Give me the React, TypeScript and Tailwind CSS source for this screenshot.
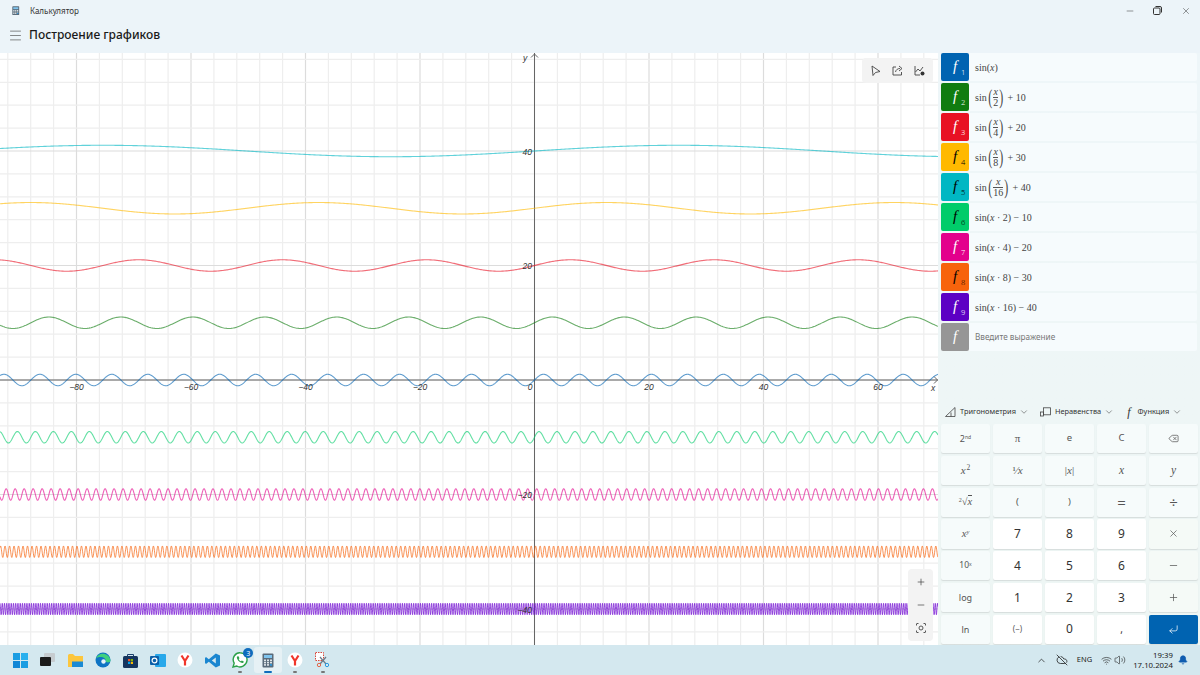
import { useMemo, type ReactNode } from 'react';
import {
  ChevronDown,
  ChevronUp,
  CloudOff,
  CornerDownLeft,
  Delete,
  Menu,
  Minus,
  Plus,
  Bell,
  Volume2,
  Wifi,
  X
} from 'lucide-react';

const UI = { fontFamily: '"Noto Sans", "Open Sans", sans-serif' };
const SERIF = { fontFamily: '"Liberation Serif", serif' };

// chart geometry, in page pixels
const X0 = 534.5;
const Y0 = 380;
const UNIT = 5.725;
const TOP = 53;
const BOTTOM = 645;
const RIGHT = 938;

const CURVES = [
  { k: 1, off: 0, color: '#0063b1', step: 0.5 },
  { k: 0.5, off: 10, color: '#107c10', step: 1 },
  { k: 0.25, off: 20, color: '#e81123', step: 1 },
  { k: 0.125, off: 30, color: '#ffb900', step: 1 },
  { k: 0.0625, off: 40, color: '#00b7c3', step: 1 },
  { k: 2, off: -10, color: '#00cc6a', step: 0.5 },
  { k: 4, off: -20, color: '#e3008c', step: 0.25 },
  { k: 8, off: -30, color: '#f7630c', step: 0.2 },
  { k: 16, off: -40, color: '#6b00d0', step: 0.1 }
];

function curvePath(k: number, off: number, step: number) {
  const pts: string[] = [];
  for (let px = 0; px <= RIGHT; px += step) {
    const x = (px - X0) / UNIT;
    const y = Y0 - UNIT * (Math.sin(x * k) + off);
    pts.push(`${px.toFixed(2)},${y.toFixed(2)}`);
  }
  return 'M' + pts.join('L');
}

function Chart() {
  const paths = useMemo(() => CURVES.map((c) => ({ ...c, d: curvePath(c.k, c.off, c.step) })), []);
  const vLines: number[] = [];
  for (let i = -24; i <= 18; i++) vLines.push(i);
  const hLines: number[] = [];
  for (let i = -12; i <= 14; i++) hLines.push(i);
  return (
    <svg className="block h-full w-full" viewBox={`0 ${TOP} ${RIGHT} ${BOTTOM - TOP}`}>
      {vLines.map((i) => {
        const x = X0 + i * 4 * UNIT;
        return <line key={i} x1={x} x2={x} y1={TOP} y2={BOTTOM} stroke={i % 5 === 0 ? '#dcdcdc' : '#eeeeee'} strokeWidth={1.2} />;
      })}
      {hLines.map((i) => {
        const y = Y0 - i * 4 * UNIT;
        return <line key={i} x1={0} x2={RIGHT} y1={y} y2={y} stroke={i % 5 === 0 ? '#dcdcdc' : '#eeeeee'} strokeWidth={1.2} />;
      })}
      <line x1={0} x2={RIGHT} y1={Y0} y2={Y0} stroke="#666" strokeWidth={1} />
      <line x1={X0} x2={X0} y1={TOP} y2={BOTTOM} stroke="#666" strokeWidth={1} />
      <path d={`M${X0 - 3.5} ${TOP + 4.5}L${X0} ${TOP + 1}L${X0 + 3.5} ${TOP + 4.5}`} fill="none" stroke="#666" />
      <path d={`M${RIGHT - 4} ${Y0 - 3.5}L${RIGHT - 0.5} ${Y0}L${RIGHT - 4} ${Y0 + 3.5}`} fill="none" stroke="#666" />
      {paths.map((c) => (
        <path key={c.k} d={c.d} fill="none" stroke={c.color} strokeOpacity={c.k >= 8 ? 0.7 : 0.62} strokeWidth={c.k >= 8 ? 1 : 1.1} />
      ))}
      <g fontSize="8.5" fontStyle="italic" fill="#333" style={{ fontFamily: '"Liberation Sans", sans-serif' }}>
        {[-80, -60, -40, -20, 20, 40, 60].map((v) => (
          <text key={v} x={X0 + v * UNIT} y={390} textAnchor="middle">
            {v < 0 ? `−${-v}` : v}
          </text>
        ))}
        <text x={530} y={390} textAnchor="middle">0</text>
        <text x={933} y={391} textAnchor="middle">x</text>
        <text x={525} y={61} textAnchor="middle">y</text>
        {[40, 20, -20, -40].map((v) => (
          <text key={v} x={532} y={Y0 - v * UNIT + 3.5} textAnchor="end">
            {v < 0 ? `−${-v}` : v}
          </text>
        ))}
      </g>
    </svg>
  );
}

function Paren({ children }: { children: ReactNode }) {
  return (
    <span className="inline-flex items-center">
      <span className="text-[20px] leading-none font-light scale-x-60">(</span>
      {children}
      <span className="text-[20px] leading-none font-light scale-x-60">)</span>
    </span>
  );
}

function Frac({ d }: { d: string }) {
  return (
    <span className="inline-flex flex-col items-center text-[10px] leading-[10px]">
      <span className="italic">x</span>
      <span className="border-t border-[#555]">{d}</span>
    </span>
  );
}

function Sin({ d, tail }: { d: string; tail: string }) {
  return (
    <span className="inline-flex items-center whitespace-pre">
      sin
      <Paren>
        <Frac d={d} />
      </Paren>
      {tail}
    </span>
  );
}

const FUNCS: { color: string; dark?: boolean; body: ReactNode }[] = [
  { color: '#0063b1', body: <span>sin(<i>x</i>)</span> },
  { color: '#107c10', body: <Sin d="2" tail=" + 10" /> },
  { color: '#e81123', body: <Sin d="4" tail=" + 20" /> },
  { color: '#ffb900', dark: true, body: <Sin d="8" tail=" + 30" /> },
  { color: '#00b7c3', dark: true, body: <Sin d="16" tail=" + 40" /> },
  { color: '#00cc6a', dark: true, body: <span>sin(<i>x</i> · 2) − 10</span> },
  { color: '#e3008c', body: <span>sin(<i>x</i> · 4) − 20</span> },
  { color: '#f7630c', dark: true, body: <span>sin(<i>x</i> · 8) − 30</span> },
  { color: '#5c00c4', body: <span>sin(<i>x</i> · 16) − 40</span> }
];

function Swatch({ color, dark, n }: { color: string; dark?: boolean; n?: number }) {
  return (
    <div
      className={`flex h-[28px] w-[28px] shrink-0 items-center justify-center rounded-[2px] ${dark ? 'text-black' : 'text-white'}`}
      style={{ backgroundColor: color }}
    >
      <span className="relative -translate-y-[1px] text-[15px] leading-none font-light italic" style={SERIF}>
        f
        {n && (
          <span className="absolute top-[10px] left-[8px] text-[7.5px] not-italic" style={UI}>
            {n}
          </span>
        )}
      </span>
    </div>
  );
}

function FunctionList() {
  return (
    <div className="flex flex-col gap-[2px] pl-[3px] pr-[3px]">
      {FUNCS.map((f, i) => (
        <div key={i} className="flex h-[28px] items-center gap-[6px] rounded-[2px] bg-[#f6fbfd]">
          <Swatch color={f.color} dark={f.dark} n={i + 1} />
          <div className="text-[10px] text-[#444]" style={SERIF}>
            {f.body}
          </div>
        </div>
      ))}
      <div className="flex h-[28px] items-center gap-[6px] rounded-[2px] bg-[#f6fbfd]">
        <Swatch color="#969696" />
        <div className="text-[8.2px] text-[#777]" style={UI}>
          Введите выражение
        </div>
      </div>
    </div>
  );
}

type Kind = 'fn' | 'num' | 'op' | 'go';
const KEYS: { k: Kind; c: ReactNode; key: string }[] = [
  { key: '2nd', k: 'fn', c: <span className="text-[9px]">2<sup className="text-[5px]">nd</sup></span> },
  { key: 'pi', k: 'fn', c: <span className="text-[11px]" style={SERIF}>π</span> },
  { key: 'e', k: 'fn', c: <span className="text-[9.5px]">e</span> },
  { key: 'C', k: 'fn', c: <span className="text-[9.5px]">C</span> },
  { key: 'bs', k: 'fn', c: <Delete size={11} strokeWidth={1.6} /> },
  { key: 'x2', k: 'fn', c: <span className="text-[11px]" style={SERIF}><i>x</i><sup className="ml-[1px] text-[7.5px]">2</sup></span> },
  { key: '1x', k: 'fn', c: <span className="text-[11px]" style={SERIF}>¹⁄<i>x</i></span> },
  { key: 'abs', k: 'fn', c: <span className="text-[11px]" style={SERIF}>|<i>x</i>|</span> },
  { key: 'x', k: 'fn', c: <i className="text-[11.5px]" style={SERIF}>x</i> },
  { key: 'y', k: 'fn', c: <i className="text-[11.5px]" style={SERIF}>y</i> },
  { key: 'root', k: 'fn', c: <span className="text-[10.5px]" style={SERIF}><sup className="text-[6px]">2</sup>√<i className="border-t border-[#555]">x</i></span> },
  { key: 'lp', k: 'fn', c: <span className="text-[9.5px]">(</span> },
  { key: 'rp', k: 'fn', c: <span className="text-[9.5px]">)</span> },
  { key: 'eq', k: 'fn', c: <span className="text-[15px] leading-none">=</span> },
  { key: 'div', k: 'fn', c: <span className="text-[15px] leading-none">÷</span> },
  { key: 'xy', k: 'fn', c: <span className="text-[10.5px]" style={SERIF}><i>x</i><sup className="text-[6.5px]"><i>y</i></sup></span> },
  { key: '7', k: 'num', c: '7' },
  { key: '8', k: 'num', c: '8' },
  { key: '9', k: 'num', c: '9' },
  { key: 'mul', k: 'op', c: <X size={11} strokeWidth={1.5} /> },
  { key: '10x', k: 'fn', c: <span className="text-[8.5px]">10<sup className="text-[5px]">x</sup></span> },
  { key: '4', k: 'num', c: '4' },
  { key: '5', k: 'num', c: '5' },
  { key: '6', k: 'num', c: '6' },
  { key: 'sub', k: 'op', c: <Minus size={11} strokeWidth={1.6} /> },
  { key: 'log', k: 'fn', c: <span className="text-[9px]">log</span> },
  { key: '1', k: 'num', c: '1' },
  { key: '2', k: 'num', c: '2' },
  { key: '3', k: 'num', c: '3' },
  { key: 'add', k: 'op', c: <Plus size={11} strokeWidth={1.6} /> },
  { key: 'ln', k: 'fn', c: <span className="text-[9px]">ln</span> },
  { key: 'neg', k: 'num', c: <span className="text-[8px] text-[#555]">(−)</span> },
  { key: '0', k: 'num', c: '0' },
  { key: 'comma', k: 'num', c: <span className="text-[10px]">,</span> },
  { key: 'go', k: 'go', c: <CornerDownLeft size={11} strokeWidth={1.6} /> }
];

const KEY_STYLE: Record<Kind, string> = {
  fn: 'bg-[#f6fbfb] text-[#555]',
  num: 'bg-white text-[#333] text-[12px]',
  op: 'bg-[#f5faf7] text-[#555]',
  go: 'bg-[#0063b1] text-white'
};

function Keypad() {
  return (
    <div className="grid h-[220px] grid-cols-5 grid-rows-7 gap-x-[3px] gap-y-[2.6px] pl-[3px] pr-[2px]" style={UI}>
      {KEYS.map((b) => (
        <div
          key={b.key}
          className={`flex items-center justify-center rounded-[2px] shadow-[0_1px_1px_rgba(0,0,0,0.1)] ${KEY_STYLE[b.k]}`}
        >
          {b.c}
        </div>
      ))}
    </div>
  );
}

function Dropdowns() {
  return (
    <div className="flex h-[24px] items-center text-[7.4px] text-[#333]" style={UI}>
      <div className="flex items-center pl-[7px]">
        <svg width="11" height="10" viewBox="0 0 11 10" fill="none" stroke="#444" strokeWidth="0.8">
          <path d="M0.5 9.5L10 0.5V9.5Z" />
          <path d="M6 9.5V5.5" />
        </svg>
        <span className="ml-[4px]">Тригонометрия</span>
        <ChevronDown size={10} className="ml-[3px]" strokeWidth={1.2} />
      </div>
      <div className="ml-[11px] flex items-center">
        <svg width="11" height="10" viewBox="0 0 11 10" fill="none" stroke="#444" strokeWidth="0.8">
          <rect x="3.5" y="0.8" width="7" height="7" />
          <rect x="0.5" y="5" width="3" height="4" />
        </svg>
        <span className="ml-[4px]">Неравенства</span>
        <ChevronDown size={10} className="ml-[3px]" strokeWidth={1.2} />
      </div>
      <div className="ml-[13px] flex items-center">
        <i className="text-[12px] leading-none" style={SERIF}>f</i>
        <span className="ml-[7px]">Функция</span>
        <ChevronDown size={10} className="ml-[3px]" strokeWidth={1.2} />
      </div>
    </div>
  );
}

function CalcIcon({ size = 11 }: { size?: number }) {
  return (
    <svg width={size} height={size * 1.25} viewBox="0 0 12 15">
      <rect x="0.5" y="0.5" width="11" height="14" rx="1" fill="#5a6b7a" />
      <rect x="2" y="2" width="8" height="3" fill="#7fc4ee" />
      {[6.5, 8.8, 11.1].map((y) =>
        [2, 5, 8].map((x) => <rect key={`${x}-${y}`} x={x} y={y} width="2" height="1.6" fill={x === 8 && y === 11.1 ? '#2d9be0' : '#dfe6ea'} />)
      )}
    </svg>
  );
}

function YandexIcon() {
  return (
    <svg width="16" height="16" viewBox="0 0 16 16">
      <circle cx="8" cy="8" r="7.5" fill="#fff" />
      <path d="M4.5 3.5L8 9M11.5 3.5L8 9V13.5" fill="none" stroke="#f0352a" strokeWidth="2.2" />
    </svg>
  );
}

const TASK_ICONS: ReactNode[] = [
  <svg width="15" height="15" viewBox="0 0 15 15" key="win">
    <rect width="7" height="7" fill="#1b9de2" />
    <rect x="8" width="7" height="7" fill="#2ab0ee" />
    <rect y="8" width="7" height="7" fill="#1287d6" />
    <rect x="8" y="8" width="7" height="7" fill="#1b9de2" />
  </svg>,
  <svg width="15" height="14" viewBox="0 0 15 14" key="tv">
    <rect x="4" y="0" width="11" height="9" rx="1" fill="#c6ccd0" />
    <rect x="0" y="4" width="11" height="9" rx="1" fill="#1b1b1b" />
  </svg>,
  <svg width="15" height="13" viewBox="0 0 15 13" key="folder">
    <path d="M0 1.5Q0 0 1.5 0H5L7 2H15V13H0Z" fill="#fcc63d" />
    <rect x="4" y="7.5" width="11" height="5.5" fill="#1a8ad4" />
  </svg>,
  <svg width="16" height="16" viewBox="0 0 16 16" key="edge">
    <circle cx="8" cy="8" r="7.5" fill="#0f74c4" />
    <path d="M1 6.5C3 0 14 0 15.5 8.5C15.5 11 11 11 10.5 9C12 6 5 3 1 6.5Z" fill="#3fd07d" />
    <circle cx="8.5" cy="9.5" r="2.2" fill="#e6f4f8" />
  </svg>,
  <svg width="15" height="15" viewBox="0 0 15 15" key="store">
    <path d="M4.5 3V1.5H10.5V3" fill="none" stroke="#1b3f6d" strokeWidth="1" />
    <rect y="3" width="15" height="12" rx="1.5" fill="#16355e" />
    <rect x="5" y="6" width="2.2" height="2.2" fill="#f25022" />
    <rect x="7.8" y="6" width="2.2" height="2.2" fill="#7fba00" />
    <rect x="5" y="8.8" width="2.2" height="2.2" fill="#00a4ef" />
    <rect x="7.8" y="8.8" width="2.2" height="2.2" fill="#ffb900" />
  </svg>,
  <svg width="16" height="15" viewBox="0 0 16 15" key="outlook">
    <rect x="5" y="1" width="11" height="13" rx="1" fill="#28a8ea" />
    <rect x="0" y="3" width="9" height="9" rx="1" fill="#0b5fa8" />
    <circle cx="4.5" cy="7.5" r="2.4" fill="none" stroke="#fff" strokeWidth="1.2" />
  </svg>,
  <YandexIcon key="ya1" />,
  <svg width="15" height="15" viewBox="0 0 15 15" key="vsc">
    <path d="M10.8 0.5L15 2.5V12.5L10.8 14.5L3.8 8.8L1 11L0 10V5L1 4L3.8 6.2ZM10.8 4.5L6.8 7.5L10.8 10.5Z" fill="#1a86d0" fillRule="evenodd" />
  </svg>,
  <span className="relative block h-[16px] w-[16px]" key="wa">
    <svg width="16" height="16" viewBox="0 0 16 16">
      <path d="M1 15L2.2 11.2C-1 5.5 4 0.5 8 0.8C12.5 0.8 15.5 4.5 15 8.5C14.5 13.5 8.5 16.5 4.8 14Z" fill="#fff" stroke="#2ca14a" strokeWidth="1.4" />
      <path d="M5 4.5C4 7 8 11.5 11.2 11L11.8 9.5L9.8 8.5L9 9.3C8 9 7 8 6.7 7L7.5 6.2L6.5 4.3Z" fill="#2ca14a" />
    </svg>
    <span className="absolute -top-[4px] -right-[5px] flex h-[10px] w-[10px] items-center justify-center rounded-full bg-[#0f6cbd] text-[7px] leading-none text-white">
      3
    </span>
  </span>,
  <CalcIcon key="calc" size={12} />,
  <YandexIcon key="ya2" />,
  <svg width="15" height="16" viewBox="0 0 15 16" key="snip" fill="none">
    <rect x="0.5" y="0.5" width="8" height="8" fill="#fff" stroke="#d9483b" strokeDasharray="1.5 1" />
    <path d="M5 5L11 12M11 5L5 12" stroke="#6b7a88" strokeWidth="1.2" />
    <circle cx="12" cy="13" r="1.7" stroke="#2d9be0" />
    <circle cx="4" cy="13" r="1.7" stroke="#e2674a" />
  </svg>
];

function Taskbar() {
  return (
    <div className="flex h-[30px] items-center justify-between bg-[#d4e8ef] pl-[6.5px]">
      <div className="flex h-full items-center">
        {TASK_ICONS.map((ic, i) => (
          <div
            key={i}
            className={`relative flex h-[26px] w-[27.5px] items-center justify-center rounded-[3px] ${i === 9 ? 'bg-[#e6f1f5]' : ''}`}
          >
            {ic}
            {i === 9 && <span className="absolute bottom-0 h-[2px] w-[8px] rounded-full bg-[#0f6cbd]" />}
            {(i === 8 || i === 10 || i === 11) && <span className="absolute bottom-0 h-[2px] w-[4px] rounded-full bg-[#777]" />}
          </div>
        ))}
      </div>
      <div className="flex h-full items-center text-[#222]" style={UI}>
        <ChevronUp size={11} strokeWidth={1.6} />
        <CloudOff size={12} strokeWidth={1.6} className="ml-[9px]" />
        <span className="ml-[9px] text-[7.5px]">ENG</span>
        <Wifi size={11} strokeWidth={1.4} className="ml-[9px]" />
        <Volume2 size={12} strokeWidth={1.2} className="ml-[2px]" />
        <div className="ml-[7px] text-right text-[7.8px] leading-[10px]">
          <div>19:39</div>
          <div>17.10.2024</div>
        </div>
        <Bell size={10} fill="#0f5cb0" stroke="#0f5cb0" className="mr-[12px] ml-[5px]" />
      </div>
    </div>
  );
}

export default function App() {
  return (
    <div className="flex h-[675px] w-[1200px] flex-col overflow-hidden bg-[#eef5f7]" style={UI}>
      {/* Title bar */}
      <div className="flex h-[21px] items-center justify-between bg-[#ecf4f9] pl-[12px]">
        <div className="flex items-center">
          <CalcIcon size={7.5} />
          <span className="ml-[10.5px] text-[8px] text-[#333]">Калькулятор</span>
        </div>
        <div className="flex items-center text-[#333]">
          <Minus size={10} strokeWidth={1.2} />
          <svg width="9" height="9" viewBox="0 0 9 9" fill="none" stroke="#333" strokeWidth="1" className="ml-[18px]">
            <rect x="0.5" y="2" width="6.5" height="6.5" rx="1" />
            <path d="M2.5 0.5H7Q8.5 0.5 8.5 2V6.5" />
          </svg>
          <X size={10} strokeWidth={1.2} className="mr-[9px] ml-[19px]" />
        </div>
      </div>
      {/* Header */}
      <div className="flex h-[32px] items-center bg-[#ecf4f9] pb-[4px] pl-[8px]">
        <Menu size={15} strokeWidth={1.1} className="text-[#555]" />
        <span className="ml-[6px] text-[12px] font-medium text-[#1a1a1a]">Построение графиков</span>
      </div>
      {/* Body */}
      <div className="flex h-[592px]">
        <div className="relative w-[938px] bg-white">
          <Chart />
          <div className="absolute top-[5px] right-[5px] flex h-[25px] w-[71px] items-center justify-around rounded-[4px] bg-[#f3f3f3] px-[3px] text-[#444]">
            <svg width="11" height="11" viewBox="0 0 11 11" fill="none" stroke="#444" strokeWidth="0.9" strokeLinejoin="round">
              <path d="M2 1L10 6.5L5.5 7.5L3 10.5Z" />
            </svg>
            <svg width="11" height="11" viewBox="0 0 11 11" fill="none" stroke="#444" strokeWidth="0.9">
              <path d="M4 2H1V10H9.5V7" />
              <path d="M3.5 7C4 4.5 6 3.5 8 3.5M7 1L10 3.5L7 6" />
            </svg>
            <svg width="11" height="11" viewBox="0 0 11 11" fill="none" stroke="#444" strokeWidth="0.9">
              <path d="M1 1V10H6" />
              <path d="M1.5 7L4 4L6 6L9 2" />
              <circle cx="8.5" cy="8.5" r="2" fill="#333" stroke="none" />
            </svg>
          </div>
          <div className="absolute right-[5px] bottom-[4px] flex h-[72px] w-[25px] flex-col items-center justify-around rounded-[4px] bg-[#f3f3f3] py-[2px] text-[#444]">
            <Plus size={10} strokeWidth={1.7} />
            <Minus size={10} strokeWidth={1.7} />
            <svg width="10" height="10" viewBox="0 0 10 10" fill="none" stroke="#444" strokeWidth="0.9">
              <path d="M0.5 2.5V1Q0.5 0.5 1 0.5H2.5M7.5 0.5H9Q9.5 0.5 9.5 1V2.5M9.5 7.5V9Q9.5 9.5 9 9.5H7.5M2.5 9.5H1Q0.5 9.5 0.5 9V7.5" />
              <circle cx="5" cy="5" r="2" />
            </svg>
          </div>
        </div>
        <div className="flex w-[262px] flex-col justify-between bg-linear-to-b from-[#eef6f9] to-[#eef6f4] pb-[1px]">
          <FunctionList />
          <div className="flex flex-col">
            <Dropdowns />
            <Keypad />
          </div>
        </div>
      </div>
      <Taskbar />
    </div>
  );
}
